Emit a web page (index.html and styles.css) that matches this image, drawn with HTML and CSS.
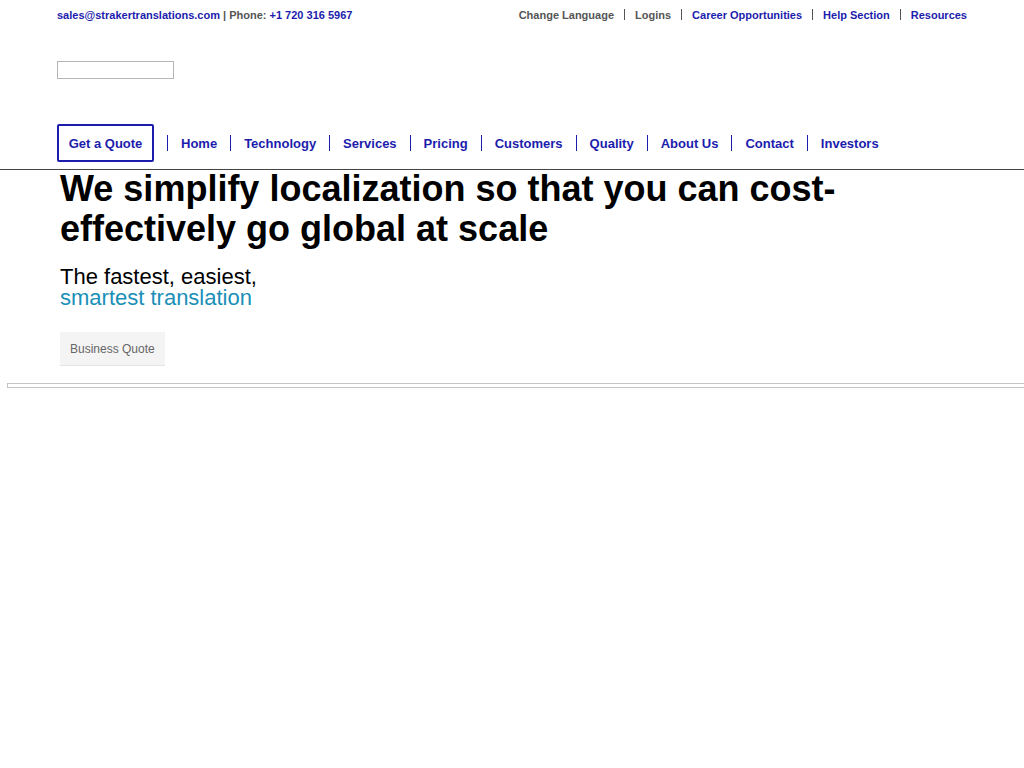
FILE: index.html
```html
<!DOCTYPE html>
<html lang="en">
<head>
    <meta charset="UTF-8">
    <title>Straker Translations</title>
    <link rel="stylesheet" href="styles.css">
</head>
<body>
    <div class="topbar">
        <div class="contact">
            <a href="#">sales@strakertranslations.com</a> | Phone: <a href="#">+1 720 316 5967</a>
        </div>
        <div class="toplinks">
            <a class="grey" href="#">Change Language</a>
            <span class="bar"></span>
            <a class="grey" href="#">Logins</a>
            <span class="bar"></span>
            <a href="#">Career Opportunities</a>
            <span class="bar"></span>
            <a href="#">Help Section</a>
            <span class="bar"></span>
            <a href="#">Resources</a>
        </div>
    </div>
    <div class="logo"></div>
    <div class="nav">
        <a class="quote" href="#">Get a Quote</a>
        <span class="sep"></span>
        <a href="#">Home</a>
        <span class="sep"></span>
        <a href="#">Technology</a>
        <span class="sep"></span>
        <a href="#">Services</a>
        <span class="sep"></span>
        <a href="#">Pricing</a>
        <span class="sep"></span>
        <a href="#">Customers</a>
        <span class="sep"></span>
        <a href="#">Quality</a>
        <span class="sep"></span>
        <a href="#">About Us</a>
        <span class="sep"></span>
        <a href="#">Contact</a>
        <span class="sep"></span>
        <a href="#">Investors</a>
    </div>
    <div class="hero">
        <h1 class="heading">We simplify localization so that you can cost-effectively go global at scale</h1>
        <p class="sub">The fastest, easiest,<br><span class="teal">smartest translation</span></p>
        <button class="btn">Business Quote</button>
    </div>
    <div class="rule"></div>
</body>
</html>
```

FILE: styles.css
```css
* {
    margin: 0;
    padding: 0;
    box-sizing: border-box;
}
html {
    overflow-x: hidden;
}
body {
    font-family: "Liberation Sans", Arial, sans-serif;
    background: #fff;
    color: #000;
}
a {
    text-decoration: none;
    color: #1c1cad;
}
.topbar {
    display: flex;
    justify-content: space-between;
    align-items: center;
    height: 29px;
    padding: 0 57px;
    font-size: 11px;
    font-weight: bold;
    color: #555;
}
.toplinks {
    display: flex;
    align-items: center;
}
.toplinks .grey {
    color: #555;
}
.bar {
    width: 1px;
    height: 11px;
    background: #555;
    margin: 0 10px;
}
.logo {
    width: 117px;
    height: 18px;
    margin: 32px 0 0 57px;
    border: 1px solid #b5b5b5;
}
.nav {
    display: flex;
    align-items: center;
    height: 38px;
    margin: 45px 0 0 57px;
    font-size: 13px;
    font-weight: bold;
}
.nav .quote {
    width: 97px;
    height: 38px;
    line-height: 36px;
    text-align: center;
    border: 2px solid #1c1cad;
    border-radius: 2px;
    margin-right: 13px;
}
.sep {
    width: 1px;
    height: 16px;
    background: #1c1cad;
    margin: 0 13px;
}
.nav .quote + .sep {
    margin-left: 0;
}
.hero {
    margin-top: 7px;
    border-top: 1px solid #444;
    padding-left: 60px;
}
.heading {
    width: 800px;
    font-size: 36px;
    line-height: 40px;
    font-weight: bold;
    margin-top: -1px;
}
.sub {
    margin-top: 17px;
    font-size: 22px;
    line-height: 21px;
}
.teal {
    color: #1a8fb8;
}
.btn {
    margin-top: 24px;
    height: 34px;
    padding: 0 10px;
    font-family: "Liberation Sans", Arial, sans-serif;
    font-size: 12px;
    color: #666;
    background: #f4f4f4;
    border: none;
    border-bottom: 1px solid #e4e4e4;
}
.rule {
    width: 1030px;
    height: 5px;
    margin: 17px 0 0 7px;
    border: 1px solid #c4c4c4;
    border-right: none;
}
```
